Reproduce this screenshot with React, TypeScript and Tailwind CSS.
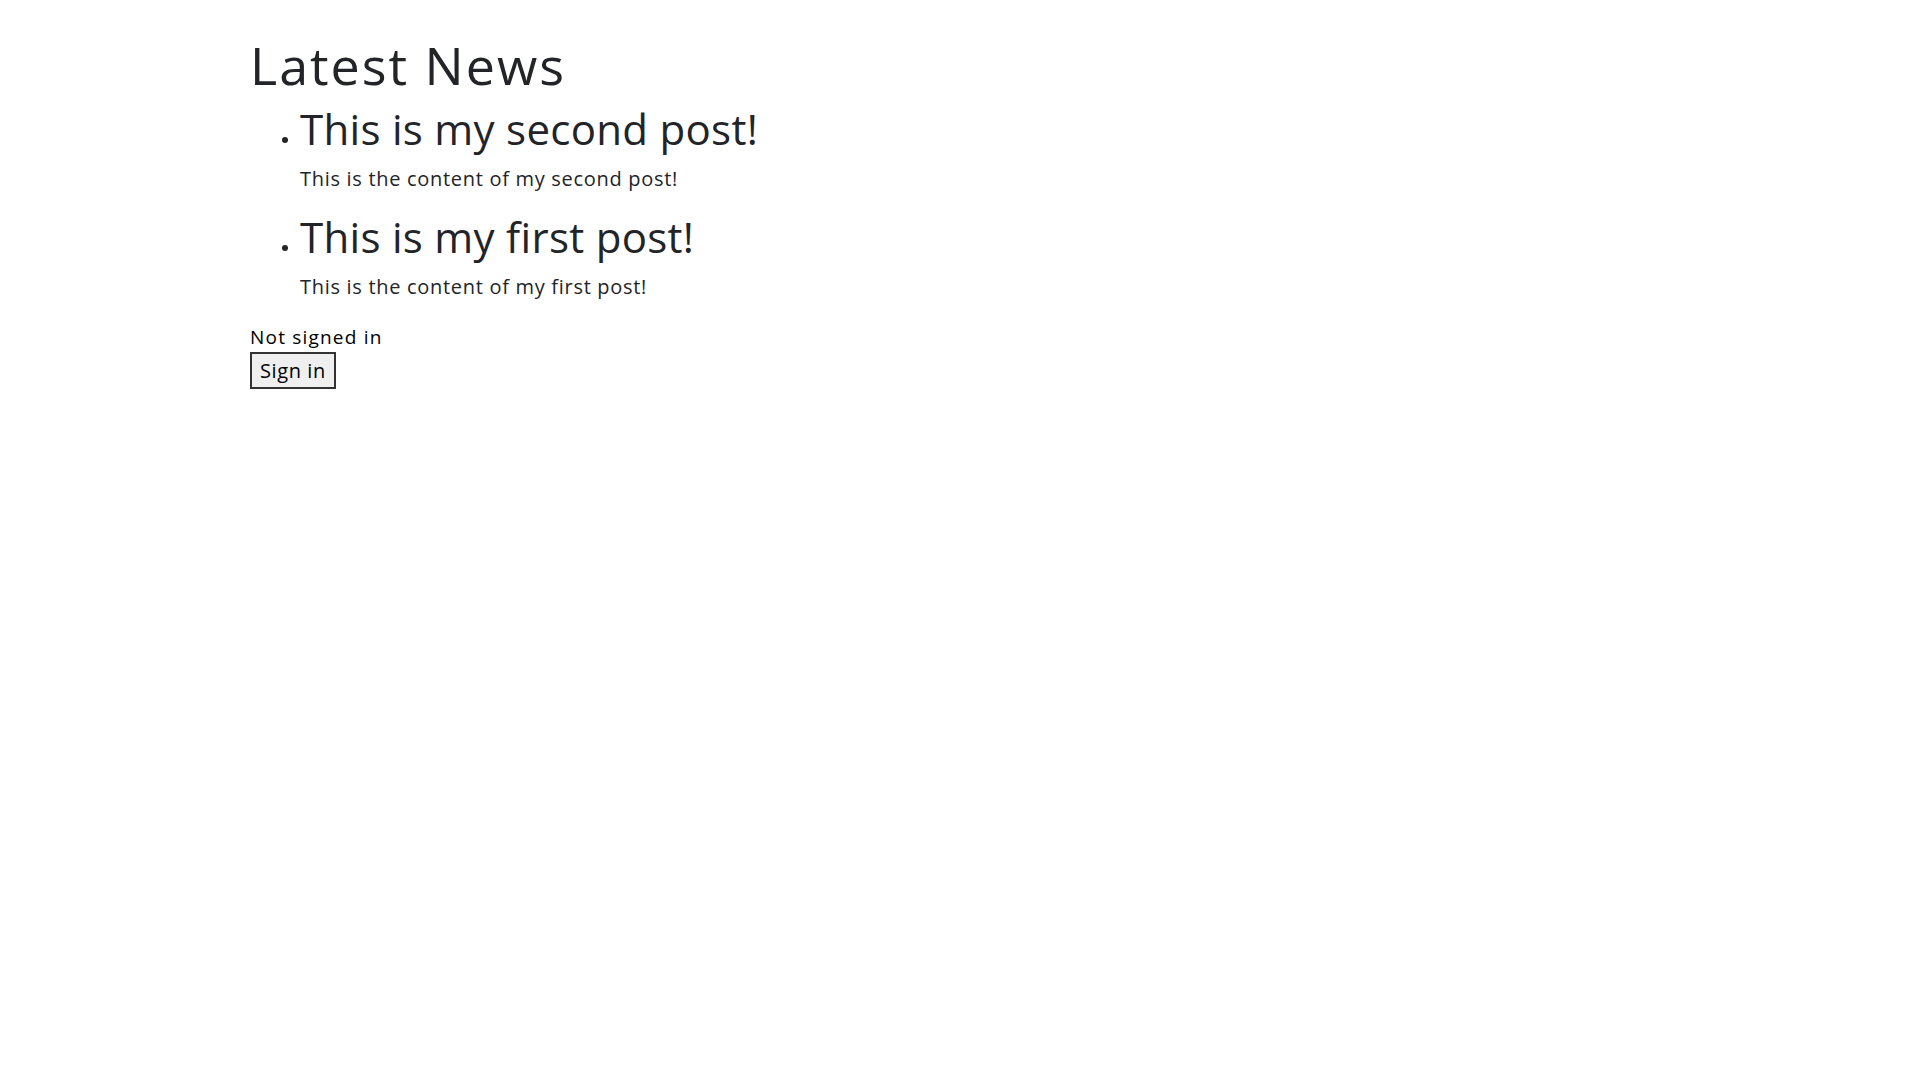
import React from "react";

type Post = { title: string; content: string };

const posts: Post[] = [
  { title: "This is my second post!", content: "This is the content of my second post!" },
  { title: "This is my first post!", content: "This is the content of my first post!" },
];

const PostItem: React.FC<Post> = ({ title, content }) => (
  <li className="list-disc">
    <h2 className="text-[42px] leading-[48px] tracking-[0.3px] font-normal">{title}</h2>
    <p className="text-[20px] leading-[24px] tracking-[0.7px] mt-[14px]">{content}</p>
  </li>
);

export default function App() {
  return (
    <div className="min-h-screen bg-white text-[#222428] font-['Open_Sans',sans-serif]">
      <div className="pl-[250px] pt-[35px]">
        <h1 className="text-[52px] leading-[60px] tracking-[2px] font-normal">Latest News</h1>
        <ul className="pl-[50px] mt-[10px] flex flex-col gap-[22px]">
          {posts.map((post, index) => (
            <PostItem key={index} {...post} />
          ))}
        </ul>
        <div className="mt-[27px]">
          <p className="text-[19px] leading-[22px] tracking-[1.2px] text-black">Not signed in</p>
          <button className="mt-[4px] h-[37px] px-[8px] border-2 border-[#333] bg-[#efefef] text-[20px] leading-[24px] tracking-[0.6px] text-black">
            Sign in
          </button>
        </div>
      </div>
    </div>
  );
}
